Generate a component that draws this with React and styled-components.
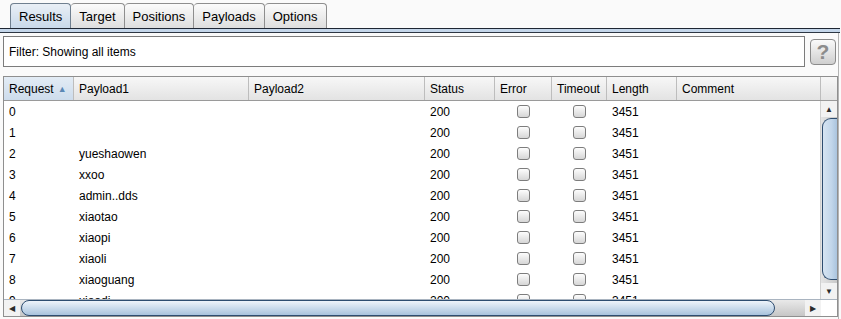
import styled, {createGlobalStyle} from "styled-components";

const GlobalStyle = createGlobalStyle`
  html, body {
    margin: 0;
    padding: 0;
    background: #fafafa;
  }
  body {
    font-family: "Liberation Sans", Arial, sans-serif;
    font-size: 12px;
    color: #000;
  }
`;

const COLS = "70px 175px 176px 70px 57px 55px 70px 144px";

const Window = styled.div`
  width: 841px;
  height: 319px;
  overflow: hidden;
  display: flex;
  flex-direction: column;
`;

const TabBar = styled.div`
  display: flex;
  align-items: flex-end;
  height: 25px;
  padding: 3px 0 0 10px;
`;

const Tab = styled.div`
  height: 24px;
  padding: 0 8px;
  display: flex;
  align-items: center;
  border: 1px solid ${({active}) => (active ? "#6f7f8f" : "#8e8e8e")};
  border-bottom: none;
  border-left-width: ${({first}) => (first ? "1px" : "0")};
  border-radius: 4px 4px 0 0;
  background: ${({active}) =>
    active
      ? "linear-gradient(#e9eff6, #c9d9ea)"
      : "linear-gradient(#fbfbfb, #dedede)"};
  font-size: 13px;
`;

const TabRule = styled.div`
  width: 840px;
  height: 3px;
  border-top: 1px solid #1e2633;
  border-bottom: 1px solid #2d3744;
  background: #c4d6ea;
`;

const Panel = styled.div`
  flex: 1;
  width: 835px;
  padding: 3px 0 0 3px;
  border-right: 1px solid #b4b4b4;
  display: flex;
  flex-direction: column;
`;

const FilterRow = styled.div`
  display: flex;
  align-items: center;
  gap: 5px;
`;

const FilterBox = styled.div`
  flex: 1;
  box-sizing: border-box;
  height: 31px;
  border: 1px solid #7c7c7c;
  background: #fff;
  display: flex;
  align-items: center;
  padding-left: 5px;
`;

const HelpButton = styled.div`
  width: 24px;
  height: 24px;
  margin-right: 2px;
  border: 1px solid #8a8a8a;
  border-radius: 4px;
  background: linear-gradient(#fafafa, #cfcfcf);
  color: #8c8c8c;
  font-weight: bold;
  font-size: 21px;
  display: flex;
  align-items: center;
  justify-content: center;
`;

const Table = styled.div`
  margin-top: 9px;
  width: 833px;
  border: 1px solid #8f8f8f;
  background: #fff;
  display: flex;
  flex-direction: column;
`;

const HeaderRow = styled.div`
  display: grid;
  grid-template-columns: ${COLS} 16px;
  height: 23px;
  border-bottom: 1px solid #9a9a9a;
  background: linear-gradient(#f7f7f7, #e3e3e3);
`;

const HeaderCell = styled.div`
  display: flex;
  align-items: center;
  gap: 4px;
  padding-left: 5px;
  border-right: 1px solid #bdbdbd;
  background: ${({sorted}) =>
    sorted ? "linear-gradient(#e3ecf5, #cddcec)" : "transparent"};
`;

const SortArrow = styled.span`
  color: #5b88b5;
  font-size: 9px;
`;

const BodyArea = styled.div`
  display: flex;
  height: 198px;
`;

const Rows = styled.div`
  flex: 1;
  overflow: hidden;
`;

const Row = styled.div`
  display: grid;
  grid-template-columns: ${COLS};
  height: 21px;
  align-items: center;
`;

const Cell = styled.div`
  white-space: nowrap;
  display: flex;
  justify-content: ${({center}) => (center ? "center" : "flex-start")};
  padding-left: ${({center}) => (center ? "0" : "5px")};
`;

const Checkbox = styled.span`
  width: 11px;
  height: 11px;
  border: 1px solid #7d7d7d;
  border-radius: 3px;
  background: linear-gradient(#fdfdfd, #d6d6d6);
`;

const VScroll = styled.div`
  width: 16px;
  display: flex;
  flex-direction: column;
  background: linear-gradient(90deg, #e4e4e4, #c9c9c9);
  border-left: 1px solid #d0d0d0;
`;

const ArrowButton = styled.div`
  width: 16px;
  height: 16px;
  flex: none;
  display: flex;
  align-items: center;
  justify-content: center;
  color: #2b2b2b;
  font-size: 8px;
  background: #f2f2f2;
`;

const VThumb = styled.div`
  flex: 1;
  margin: 1px 0 3px 1px;
  border: 1px solid #2e4d70;
  border-right: none;
  border-radius: 9px 0 0 9px;
  background: linear-gradient(90deg, #d6e4f2, #c2d6ea 60%, #aac4de);
`;

const HScrollRow = styled.div`
  display: flex;
  height: 16px;
  border-top: 1px solid #a9b4c0;
`;

const HScroll = styled.div`
  width: 817px;
  display: flex;
  background: linear-gradient(#e9e9e9, #c6c6c6);
`;

const HThumb = styled.div`
  width: 752px;
  border: 1px solid #2e4d70;
  border-radius: 12px;
  margin-left: 1px;
  background: linear-gradient(#eef4fa, #c7d9ea 55%, #a9c3dd);
`;

const Corner = styled.div`
  width: 16px;
  background: #fff;
`;

const Spacer = styled.div`
  flex: 1;
`;

const rows = [
  ["0", ""],
  ["1", ""],
  ["2", "yueshaowen"],
  ["3", "xxoo"],
  ["4", "admin..dds"],
  ["5", "xiaotao"],
  ["6", "xiaopi"],
  ["7", "xiaoli"],
  ["8", "xiaoguang"],
  ["9", "xiaodi"]
];

const tabs = ["Results", "Target", "Positions", "Payloads", "Options"];

export default function App() {
  return (
    <Window>
      <GlobalStyle />
      <TabBar>
        {tabs.map((t, i) => (
          <Tab key={t} active={i === 0} first={i === 0}>
            {t}
          </Tab>
        ))}
      </TabBar>
      <TabRule />
      <Panel>
        <FilterRow>
          <FilterBox>Filter: Showing all items</FilterBox>
          <HelpButton>?</HelpButton>
        </FilterRow>
        <Table>
          <HeaderRow>
            <HeaderCell sorted>
              Request <SortArrow>▲</SortArrow>
            </HeaderCell>
            <HeaderCell>Payload1</HeaderCell>
            <HeaderCell>Payload2</HeaderCell>
            <HeaderCell>Status</HeaderCell>
            <HeaderCell>Error</HeaderCell>
            <HeaderCell>Timeout</HeaderCell>
            <HeaderCell>Length</HeaderCell>
            <HeaderCell>Comment</HeaderCell>
            <div />
          </HeaderRow>
          <BodyArea>
            <Rows>
              {rows.map(([req, p1]) => (
                <Row key={req}>
                  <Cell>{req}</Cell>
                  <Cell>{p1}</Cell>
                  <Cell />
                  <Cell>200</Cell>
                  <Cell center>
                    <Checkbox />
                  </Cell>
                  <Cell center>
                    <Checkbox />
                  </Cell>
                  <Cell>3451</Cell>
                  <Cell />
                </Row>
              ))}
            </Rows>
            <VScroll>
              <ArrowButton>▲</ArrowButton>
              <VThumb />
              <ArrowButton>▼</ArrowButton>
            </VScroll>
          </BodyArea>
          <HScrollRow>
            <HScroll>
              <ArrowButton>◀</ArrowButton>
              <HThumb />
              <Spacer />
              <ArrowButton>▶</ArrowButton>
            </HScroll>
            <Corner />
          </HScrollRow>
        </Table>
      </Panel>
    </Window>
  );
}
